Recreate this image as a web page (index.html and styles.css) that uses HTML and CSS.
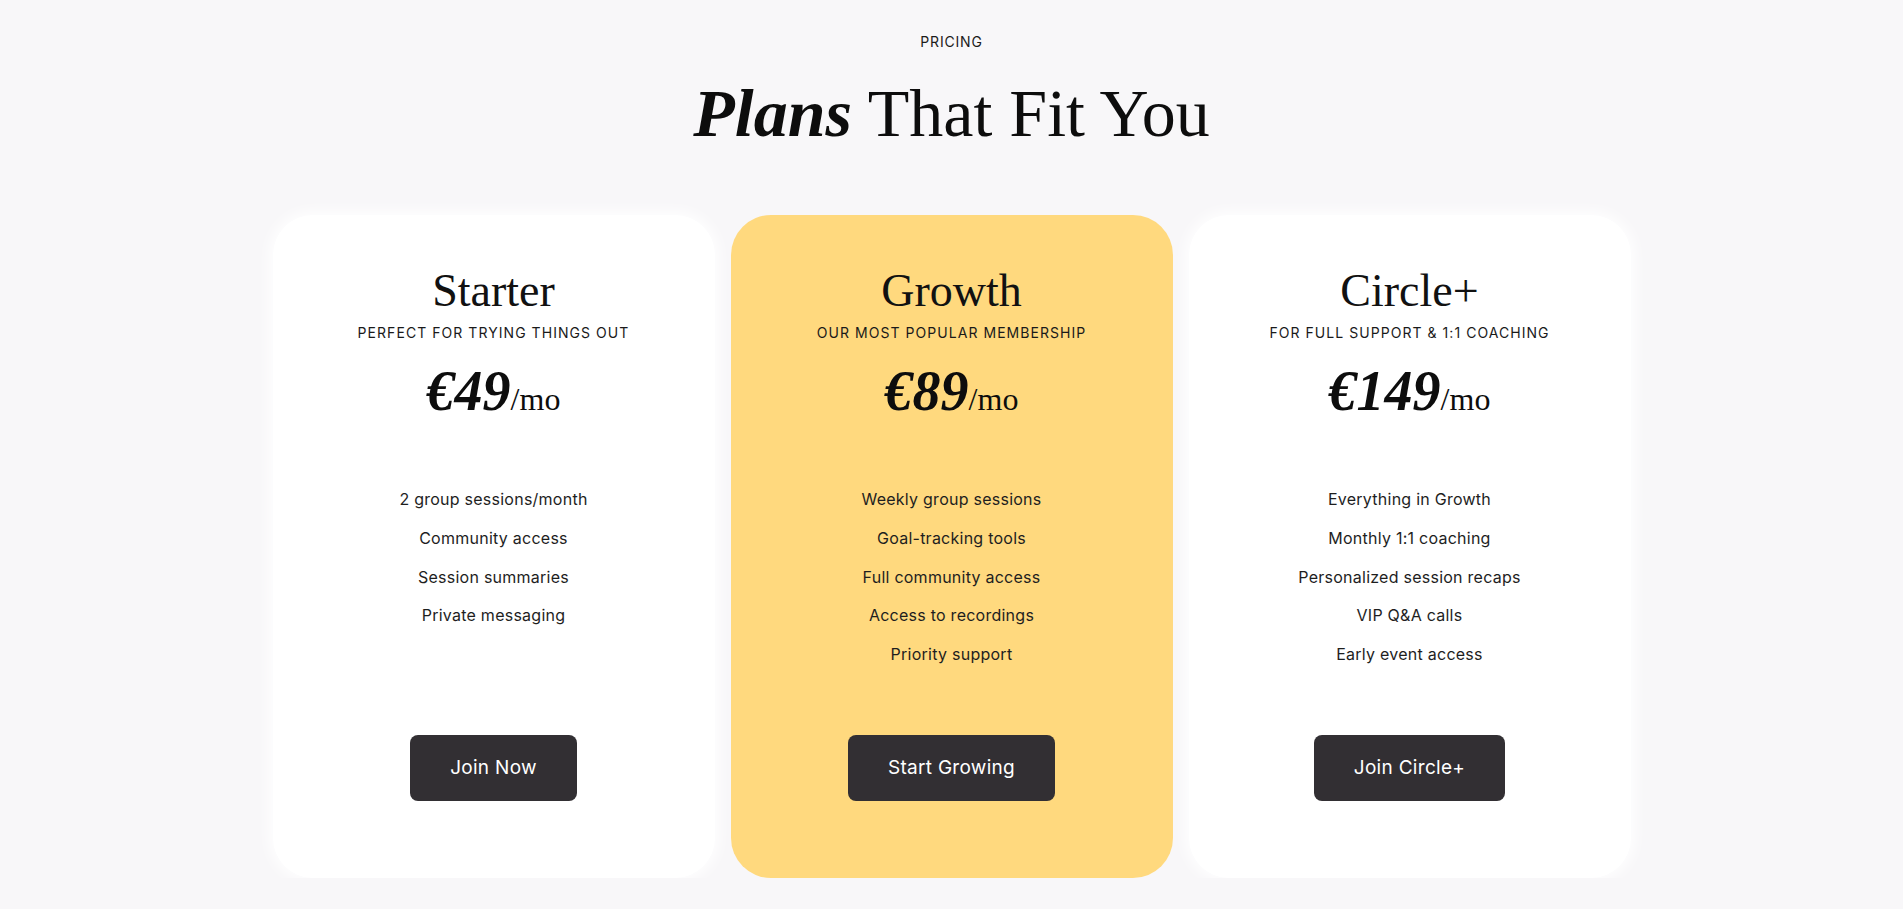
FILE: index.html
```html
<!DOCTYPE html>
<html lang="en">
<head>
<meta charset="utf-8">
<title>Pricing</title>
<link rel="stylesheet" href="styles.css">
</head>
<body>
<section class="pricing">
  <p class="eyebrow">PRICING</p>
  <h1 class="title"><em>Plans</em> That Fit You</h1>

  <div class="plans">
    <article class="plan">
      <h2 class="plan-name">Starter</h2>
      <p class="plan-tag">PERFECT FOR TRYING THINGS OUT</p>
      <p class="plan-price"><strong>€49</strong><span>/mo</span></p>
      <ul class="plan-features">
        <li>2 group sessions/month</li>
        <li>Community access</li>
        <li>Session summaries</li>
        <li>Private messaging</li>
      </ul>
      <a class="plan-btn" href="#">Join Now</a>
    </article>

    <article class="plan plan--featured">
      <h2 class="plan-name">Growth</h2>
      <p class="plan-tag">OUR MOST POPULAR MEMBERSHIP</p>
      <p class="plan-price"><strong>€89</strong><span>/mo</span></p>
      <ul class="plan-features">
        <li>Weekly group sessions</li>
        <li>Goal-tracking tools</li>
        <li>Full community access</li>
        <li>Access to recordings</li>
        <li>Priority support</li>
      </ul>
      <a class="plan-btn" href="#">Start Growing</a>
    </article>

    <article class="plan">
      <h2 class="plan-name">Circle+</h2>
      <p class="plan-tag">FOR FULL SUPPORT &amp; 1:1 COACHING</p>
      <p class="plan-price"><strong>€149</strong><span>/mo</span></p>
      <ul class="plan-features">
        <li>Everything in Growth</li>
        <li>Monthly 1:1 coaching</li>
        <li>Personalized session recaps</li>
        <li>VIP Q&amp;A calls</li>
        <li>Early event access</li>
      </ul>
      <a class="plan-btn" href="#">Join Circle+</a>
    </article>
  </div>
</section>
</body>
</html>
```

FILE: styles.css
```css
* {
  box-sizing: border-box;
}

html, body {
  margin: 0;
  padding: 0;
}

body {
  background: #f8f7f9;
  color: #141414;
  font-family: Inter, "Liberation Sans", sans-serif;
}

.pricing {
  padding-top: 34px;
  text-align: center;
}

.eyebrow {
  margin: 0;
  font-size: 14px;
  line-height: 16px;
  letter-spacing: 0.8px;
  color: #1c1c1c;
}

.title {
  margin: 29px 0 0;
  font-family: "Liberation Serif", "Times New Roman", serif;
  font-weight: 400;
  font-size: 68px;
  line-height: 68px;
  color: #0d0d0d;
}

.title em {
  font-weight: 700;
  font-style: italic;
}

.plans {
  display: grid;
  grid-template-columns: repeat(3, 442px);
  gap: 16px;
  justify-content: center;
  margin-top: 68px;
}

.plan {
  display: flex;
  flex-direction: column;
  align-items: center;
  padding: 53px 24px 77px;
  background: #ffffff;
  border-radius: 40px;
  box-shadow: 0 0 14px 4px rgba(255, 255, 255, 0.9);
}

.plan--featured {
  background: #ffd97e;
  box-shadow: none;
}

.plan-name {
  margin: 0;
  font-family: "Liberation Serif", "Times New Roman", serif;
  font-weight: 400;
  font-size: 46px;
  line-height: 46px;
  color: #111;
}

.plan-tag {
  margin: 9px 0 0;
  font-size: 14px;
  line-height: 20px;
  letter-spacing: 1.05px;
  color: #1a1a1a;
}

.plan-price {
  margin: 20px 0 0;
  font-family: "Liberation Serif", "Times New Roman", serif;
  line-height: 56px;
  color: #0d0d0d;
}

.plan-price strong {
  font-size: 56px;
  font-style: italic;
  font-weight: 700;
}

.plan-price span {
  font-size: 32px;
  font-weight: 400;
}

.plan-features {
  list-style: none;
  margin: 47px 0 61px;
  padding: 0;
  font-size: 16px;
  line-height: 38.8px;
  letter-spacing: 0.25px;
  color: #1e1e1e;
}

.plan-btn {
  margin-top: auto;
  display: inline-block;
  height: 66px;
  padding: 0 40px;
  line-height: 66px;
  font-size: 19px;
  letter-spacing: 0.3px;
  color: #ffffff;
  text-decoration: none;
  background: #322f33;
  border-radius: 8px;
}
```
